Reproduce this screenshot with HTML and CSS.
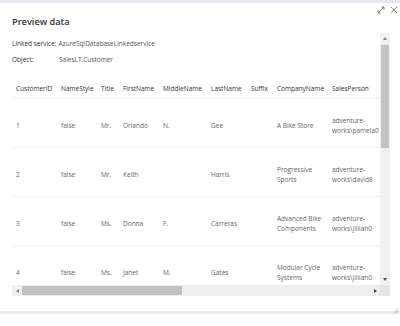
FILE: index.html
```html
<!DOCTYPE html>
<html lang="en">
<head>
<meta charset="utf-8">
<title>Preview data</title>
<link rel="stylesheet" href="styles.css">
</head>
<body>
<div class="dialog">
  <div class="dialog-head">
    <h1 class="title">Preview data</h1>
    <div class="actions">
      <svg class="icon" viewBox="0 0 8 8" width="8" height="8"><path d="M1 7 L7 1 M4.2 1 H7 V3.8 M1 4.2 V7 H3.8" fill="none" stroke="#666" stroke-width="0.8"/></svg>
      <svg class="icon" viewBox="0 0 8 8" width="8" height="8"><path d="M1 1 L7 7 M7 1 L1 7" fill="none" stroke="#666" stroke-width="0.8"/></svg>
    </div>
  </div>
  <div class="scrollbox">
    <div class="viewport">
      <div class="info">
        <div class="info-line"><span class="label">Linked service:</span> <span class="value">AzureSqlDatabaseLinkedservice</span></div>
        <div class="info-line"><span class="label label-fixed">Object:</span><span class="value">SalesLT.Customer</span></div>
      </div>
      <div class="table">
        <div class="row head">
          <div>CustomerID</div><div>NameStyle</div><div>Title</div><div>FirstName</div><div>MiddleName</div><div>LastName</div><div>Suffix</div><div>CompanyName</div><div>SalesPerson</div>
        </div>
        <div class="row">
          <div>1</div><div>false</div><div>Mr.</div><div>Orlando</div><div>N.</div><div>Gee</div><div></div><div>A Bike Store</div><div>adventure-works\pamela0</div>
        </div>
        <div class="row">
          <div>2</div><div>false</div><div>Mr.</div><div>Keith</div><div></div><div>Harris</div><div></div><div>Progressive Sports</div><div>adventure-works\david8</div>
        </div>
        <div class="row">
          <div>3</div><div>false</div><div>Ms.</div><div>Donna</div><div>F.</div><div>Carreras</div><div></div><div>Advanced Bike Components</div><div>adventure-works\jillian0</div>
        </div>
        <div class="row">
          <div>4</div><div>false</div><div>Ms.</div><div>Janet</div><div>M.</div><div>Gates</div><div></div><div>Modular Cycle Systems</div><div>adventure-works\jillian0</div>
        </div>
      </div>
    </div>
    <div class="vscroll">
      <div class="sbtn"><span class="tri tri-up"></span></div>
      <div class="vtrack"><div class="vthumb"></div></div>
      <div class="sbtn"><span class="tri tri-down"></span></div>
    </div>
    <div class="hscroll">
      <div class="sbtn sbtn-h"><span class="tri tri-left"></span></div>
      <div class="htrack"><div class="hthumb"></div></div>
      <div class="sbtn sbtn-h"><span class="tri tri-right"></span></div>
    </div>
    <div class="corner"></div>
  </div>
  <div class="dialog-foot">
    <svg class="grip" viewBox="0 0 7 7" width="7" height="7"><path d="M6.5 1.5 L1.5 6.5 M6.5 4 L4 6.5" fill="none" stroke="#999" stroke-width="0.7"/></svg>
  </div>
</div>
</body>
</html>
```

FILE: styles.css
```css
* { box-sizing: border-box; }
html, body { margin: 0; padding: 0; background: #fff; }
body {
  font-family: "Open Sans", "Noto Sans", sans-serif;
  color: #444;
  width: 400px;
  height: 326px;
  overflow: hidden;
}
.dialog {
  border-top: 3px solid #e4e9ef;
  display: flex;
  flex-direction: column;
}
.dialog-head {
  height: 30px;
  display: flex;
  justify-content: space-between;
  align-items: flex-start;
  padding-left: 12px;
}
.title {
  margin: 0;
  padding-top: 11px;
  font-size: 9.2px;
  line-height: 16px;
  font-weight: 600;
  color: #333;
}
.actions {
  display: flex;
  gap: 5px;
  padding-top: 3px;
  padding-right: 2px;
}
.icon { display: block; }
.scrollbox {
  margin-left: 12px;
  width: 378px;
  height: 263px;
  display: grid;
  grid-template-columns: 1fr 10px;
  grid-template-rows: 1fr 11px;
}
.viewport {
  overflow: hidden;
  font-size: 6.5px;
}
.info { padding-top: 3px; }
.info-line {
  line-height: 16px;
  height: 16px;
  white-space: nowrap;
  display: flex;
  gap: 2px;
}
.label { color: #333; }
.label-fixed { width: 45px; }
.value { color: #555; }
.table { margin-top: 12px; }
.row {
  display: grid;
  grid-template-columns: 45px 40px 22px 40px 48px 40px 26px 55px 48px;
  padding-left: 4px;
  border-bottom: 1px solid #f0f0f0;
  height: 49px;
  align-items: center;
  padding-top: 6px;
  color: #666;
  line-height: 10.5px;
}
.row > div { padding-right: 5px; }
.row > div:last-child { padding-right: 0; }
.row.head {
  height: 19px;
  padding-top: 0;
  color: #333;
  white-space: nowrap;
}
.row.head > div { padding-right: 0; }
.vscroll {
  display: flex;
  flex-direction: column;
  background: #f0f0f0;
}
.sbtn {
  height: 11px;
  flex: none;
  display: flex;
  align-items: center;
  justify-content: center;
}
.sbtn-h { width: 10px; height: auto; }
.vtrack { flex: 1; padding: 1px 1px 0; }
.vthumb { height: 103px; background: #c2c2c2; }
.hscroll {
  display: flex;
  background: #efefef;
}
.htrack { flex: 1; padding: 1px 0; }
.hthumb { width: 160px; height: 100%; background: #c2c2c2; }
.corner { background: #e4e4e4; }
.tri { width: 0; height: 0; border: 2px solid transparent; }
.tri-up { border-bottom: 3px solid #888; border-top-width: 0; }
.tri-down { border-top: 3px solid #555; border-bottom-width: 0; }
.tri-left { border-right: 3px solid #888; border-left-width: 0; }
.tri-right { border-left: 3px solid #444; border-right-width: 0; }
.dialog-foot {
  margin-top: 15px;
  height: 3px;
  background: #ececec;
  display: flex;
  justify-content: flex-end;
  align-items: flex-end;
}
.grip { display: block; margin-right: 1px; margin-bottom: 0; }
```
